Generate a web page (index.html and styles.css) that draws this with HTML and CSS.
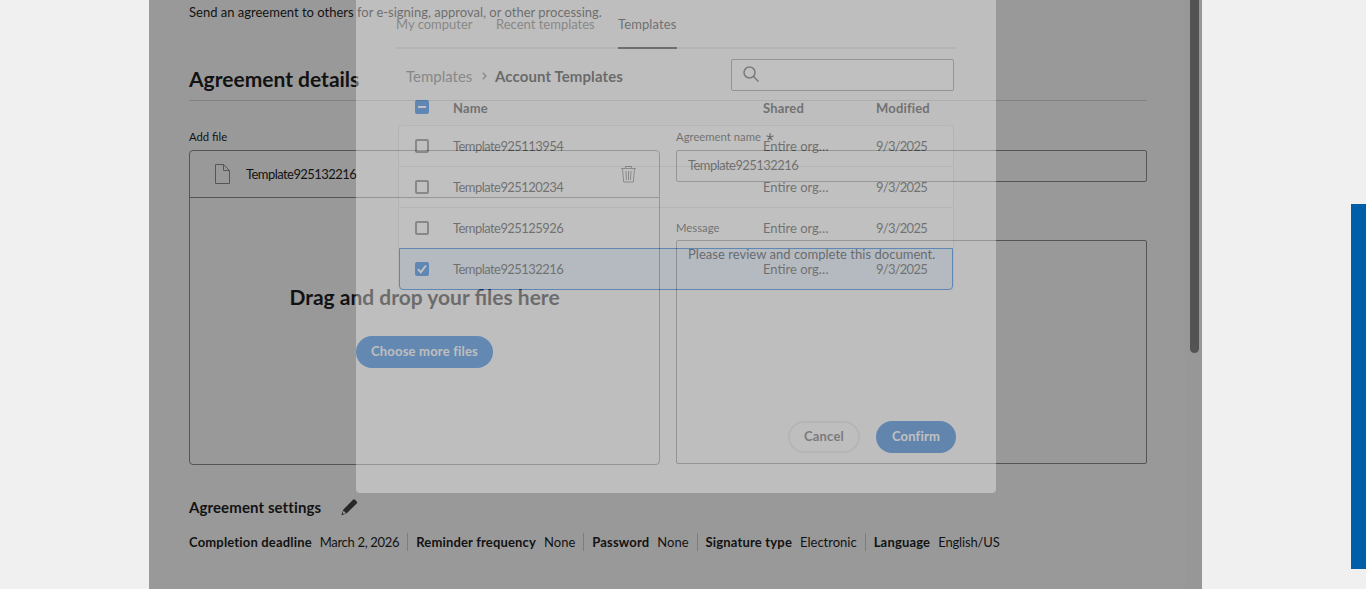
FILE: index.html
```html
<!DOCTYPE html>
<html lang="en">
<head>
    <meta charset="UTF-8">
    <meta name="viewport" content="width=device-width, initial-scale=1.0">
    <title>Agreement details</title>
    <link rel="stylesheet" href="styles.css">
</head>
<body>
    <div class="frame">
        <main class="page">
            <p class="intro"><span>Send an agreement to others for e-signing, approval, or other processing.</span></p>
            <h1>Agreement details</h1>

            <div class="columns">
                <section class="column">
                    <div class="label">Add file</div>
                    <div class="drop-box">
                        <div class="file-row">
                            <svg class="file-icon" width="16" height="21" viewBox="0 0 16 21"><path d="M.5.5h8l6 6v13H.5zM8.500.5v6h6" /></svg>
                            <span class="name">Template925132216</span>
                            <svg class="trash-icon" width="15" height="17" viewBox="0 0 15 17"><path d="M0 2.500h15M4.500 2.500v-2h6v2M1.500 2.500l1.200 13.500h9.600L13.500 2.500M5 5l.5 9M7.500 5v9M10 5l-.5 9" /></svg>
                        </div>
                        <div class="drop-area">
                            <h2>Drag and drop your files here</h2>
                            <button class="button button-primary choose-button">Choose more files</button>
                        </div>
                    </div>
                </section>

                <section class="column">
                    <div class="label">Agreement name
                        <svg class="required" width="8" height="8" viewBox="0 0 8 8"><path d="M4 4V.300M4 4L.500 2.900M4 4l3.500-1.100M4 4L1.800 7.200M4 4l2.200 3.200" /></svg>
                    </div>
                    <div class="field"><span class="name">Template925132216</span></div>
                    <div class="label label-second">Message</div>
                    <div class="field field-message"><span>Please review and complete this document.</span></div>
                </section>
            </div>

            <div class="settings-title">
                <h3>Agreement settings</h3>
                <svg width="17" height="17" viewBox="0 0 17 17"><path d="M12.300.600q.7-.7 1.400 0l2.200 2.200q.7.700 0 1.400L6 14.100.300 16.400 2.400 10.500z" /><path class="nib" d="M2.600 11.800l2.300 2.300-2.200.9-.9-.9z" /></svg>
            </div>
            <div class="settings">
                <div class="setting"><b>Completion deadline</b><span class="value-date">March 2, 2026</span></div>
                <div class="setting"><b>Reminder frequency</b><span>None</span></div>
                <div class="setting"><b>Password</b><span>None</span></div>
                <div class="setting"><b>Signature type</b><span>Electronic</span></div>
                <div class="setting"><b>Language</b><span class="value-language">English/US</span></div>
            </div>
        </main>
        <div class="scrollbar"><div class="scroll-thumb"></div></div>

        <div class="overlay"></div>

        <div class="modal">
            <div class="tabs">
                <div class="tab tab-computer"><span>My computer</span></div>
                <div class="tab tab-recent"><span>Recent templates</span></div>
                <div class="tab tab-templates active"><span>Templates</span></div>
            </div>
            <div class="toolbar">
                <span class="crumb">Templates</span>
                <svg class="chevron" width="5" height="8" viewBox="0 0 5 8"><path d="M.800.800L4 4 .800 7.200" /></svg>
                <span class="crumb-current">Account Templates</span>
                <div class="search">
                    <svg width="17" height="17" viewBox="0 0 17 17"><circle cx="6.500" cy="6.500" r="5.500" /><path d="M10.500 10.500l5 5" /></svg>
                </div>
            </div>
            <div class="row row-head">
                <span class="check mixed"><svg width="14" height="14" viewBox="0 0 14 14"><path d="M3 7h8" /></svg></span>
                <b>Name</b>
                <b>Shared</b>
                <b>Modified</b>
            </div>
            <div class="table">
                <div class="row">
                    <span class="check"></span>
                    <span class="name">Template925113954</span>
                    <span>Entire org…</span>
                    <span class="date">9/3/2025</span>
                </div>
                <div class="row">
                    <span class="check"></span>
                    <span class="name">Template925120234</span>
                    <span>Entire org…</span>
                    <span class="date">9/3/2025</span>
                </div>
                <div class="row">
                    <span class="check"></span>
                    <span class="name">Template925125926</span>
                    <span>Entire org…</span>
                    <span class="date">9/3/2025</span>
                </div>
                <div class="row selected">
                    <span class="check checked"><svg width="14" height="14" viewBox="0 0 14 14"><path d="M3 7.300l2.800 2.900L11 3.500" /></svg></span>
                    <span class="name">Template925132216</span>
                    <span>Entire org…</span>
                    <span class="date">9/3/2025</span>
                </div>
            </div>
            <div class="actions">
                <button class="button button-secondary">Cancel</button>
                <button class="button button-primary confirm-button">Confirm</button>
            </div>
        </div>
    </div>
    <div class="side-tab"></div>
</body>
</html>
```
FILE: styles.css
```css
        * {
            box-sizing: border-box;
        }

        body {
            margin: 0;
            height: 589px;
            overflow: hidden;
            background-color: #f0f0f0;
            font-family: Lato, "Open Sans", sans-serif;
            font-size: 13px;
            line-height: 20px;
            color: #1f1f1f;
            display: flex;
            justify-content: space-between;
            padding-left: 149px;
        }

        h1, h2, h3, p {
            margin: 0;
        }

        span, b {
            white-space: nowrap;
        }

        b {
            letter-spacing: 0.17px;
        }

        svg {
            display: block;
            flex: none;
            fill: none;
            stroke: currentColor;
        }

        .frame {
            position: relative;
            width: 1053px;
            height: 589px;
            background-color: #fff;
            display: flex;
            overflow: hidden;
        }

        .page {
            width: 1036px;
            padding: 2px 38px 0 40px;
        }

        .intro {
            height: 65px;
        }

        h1 {
            height: 34px;
            border-bottom: 1px solid #d5d5d5;
            font-size: 21px;
            font-weight: 700;
            line-height: 24px;
        }

        .columns {
            display: flex;
            gap: 16px;
            margin-top: 26px;
        }

        .column {
            width: 471px;
        }

        .label {
            height: 23px;
            display: flex;
            gap: 5px;
            font-size: 11.3px;
        }

        .required {
            margin-top: 6px;
            stroke-width: 1.3;
        }

        .drop-box {
            height: 315px;
            border: 1px solid #8e8e8e;
            border-radius: 4px;
        }

        .file-row {
            height: 47px;
            padding: 0 23px 0 25px;
            display: flex;
            align-items: center;
            border-bottom: 1px solid #8e8e8e;
        }

        .name {
            letter-spacing: -0.56px;
        }

        .file-icon {
            margin-right: 15px;
            color: #8e8e8e;
        }

        .trash-icon {
            margin-left: auto;
            color: #6e6e6e;
        }

        .drop-area {
            height: 266px;
            display: flex;
            flex-direction: column;
            align-items: center;
            padding-top: 87px;
        }

        h2 {
            height: 51px;
            font-size: 21px;
            font-weight: 700;
            line-height: 24px;
        }

        .button {
            height: 32px;
            border-radius: 16px;
            border: none;
            padding: 0 0 2px;
            font-family: inherit;
            font-size: 13px;
            font-weight: 700;
            line-height: 26px;
            letter-spacing: 0.2px;
        }

        .button-primary {
            background-color: #096de0;
            color: #fff;
        }

        .choose-button {
            width: 137px;
        }

        .field {
            height: 32px;
            border: 1px solid #8e8e8e;
            border-radius: 2px;
            padding: 4px 11px;
        }

        .label-second {
            margin-top: 36px;
            height: 22px;
        }

        .field-message {
            height: 224px;
            padding-top: 3px;
            letter-spacing: 0.03px;
        }

        .settings-title {
            display: flex;
            height: 35px;
            margin-top: 32px;
        }

        h3 {
            width: 152px;
            font-size: 15px;
            font-weight: 700;
            line-height: 20px;
            letter-spacing: 0.1px;
        }

        .settings-title svg {
            margin-top: 2px;
            fill: #444;
            stroke: none;
        }

        .settings-title .nib {
            fill: #fff;
        }

        .settings {
            display: flex;
            padding-top: 1px;
            line-height: 18px;
        }

        .setting {
            display: flex;
            gap: 8px;
            margin-right: 8px;
            padding-right: 8px;
            border-right: 1px solid #d0d0d0;
        }

        .setting:last-child {
            border: none;
        }

        .value-date {
            letter-spacing: -0.32px;
        }

        .value-language {
            letter-spacing: -0.15px;
        }

        .scrollbar {
            width: 17px;
            background-color: #fcfcfc;
            padding-left: 5px;
        }

        .scroll-thumb {
            width: 9px;
            height: 353px;
            border-radius: 0 0 5px 5px;
            background-color: #8b8b8b;
        }

        .overlay {
            position: absolute;
            inset: 0;
            background-color: rgba(0, 0, 0, 0.4);
        }

        .modal {
            position: absolute;
            left: 207px;
            top: 0;
            width: 640px;
            height: 493px;
            padding: 0 40px;
            background-color: #f8f8f8;
            border-radius: 0 0 4px 4px;
            opacity: 0.39;
        }

        .tabs {
            height: 49px;
            border-bottom: 2px solid #e1e1e1;
            display: flex;
            gap: 24px;
            color: #6e6e6e;
        }

        .tab {
            height: 49px;
            padding-top: 14px;
        }

        .tab-computer {
            width: 76px;
        }

        .tab-recent {
            width: 98px;
        }

        .tab-templates {
            width: 59px;
            letter-spacing: 0.1px;
        }

        .active {
            color: #2c2c2c;
            border-bottom: 2px solid #2c2c2c;
        }

        .toolbar {
            height: 50px;
            padding: 10px 2px 0 10px;
            display: flex;
            font-size: 15px;
            line-height: 34px;
        }

        .crumb {
            width: 76px;
            color: #6e6e6e;
        }

        .chevron {
            margin: 13px 8px 0 0;
            stroke: #6e6e6e;
            stroke-width: 1.3;
        }

        .crumb-current {
            font-weight: 700;
            letter-spacing: 0.1px;
        }

        .search {
            width: 223px;
            height: 32px;
            margin-left: auto;
            padding: 6px 11px;
            border: 1px solid #8e8e8e;
            border-radius: 2px;
            background-color: #fff;
            color: #4b4b4b;
        }

        .search svg {
            stroke-width: 1.5;
        }

        .row {
            display: grid;
            grid-template-columns: 38px 310px 113px 1fr;
            align-items: center;
            height: 41px;
            padding-left: 16px;
            border-bottom: 1px solid #e1e1e1;
            color: #323232;
        }

        .row-head {
            height: 26px;
            padding: 0 0 8px 19px;
            align-items: start;
            line-height: 18px;
            border: none;
        }

        .row-head .check {
            margin-top: 1px;
        }

        .table {
            width: 556px;
            margin-left: 2px;
            border: 1px solid #e1e1e1;
            border-radius: 4px;
            background-color: #fff;
        }

        .row.selected {
            height: 42px;
            margin: -1px 0 -1px;
            padding-left: 15px;
            background-color: #e3eefd;
            border: 1px solid #096de0;
            border-radius: 0 0 4px 4px;
        }

        .date {
            letter-spacing: -0.75px;
        }

        .check {
            width: 14px;
            height: 14px;
            border: 2px solid #6e6e6e;
            border-radius: 2px;
        }

        .checked, .mixed {
            border: none;
            background-color: #096de0;
            color: #fff;
            stroke-width: 2;
        }

        .actions {
            display: flex;
            justify-content: flex-end;
            gap: 16px;
            margin-top: 131px;
        }

        .button-secondary {
            width: 72px;
            background-color: transparent;
            border: 2px solid #e1e1e1;
            color: #4b4b4b;
        }

        .confirm-button {
            width: 80px;
            background-color: #0e66ce;
        }

        .side-tab {
            width: 15px;
            height: 365px;
            margin-top: 204px;
            background-color: #005ea8;
        }
```
